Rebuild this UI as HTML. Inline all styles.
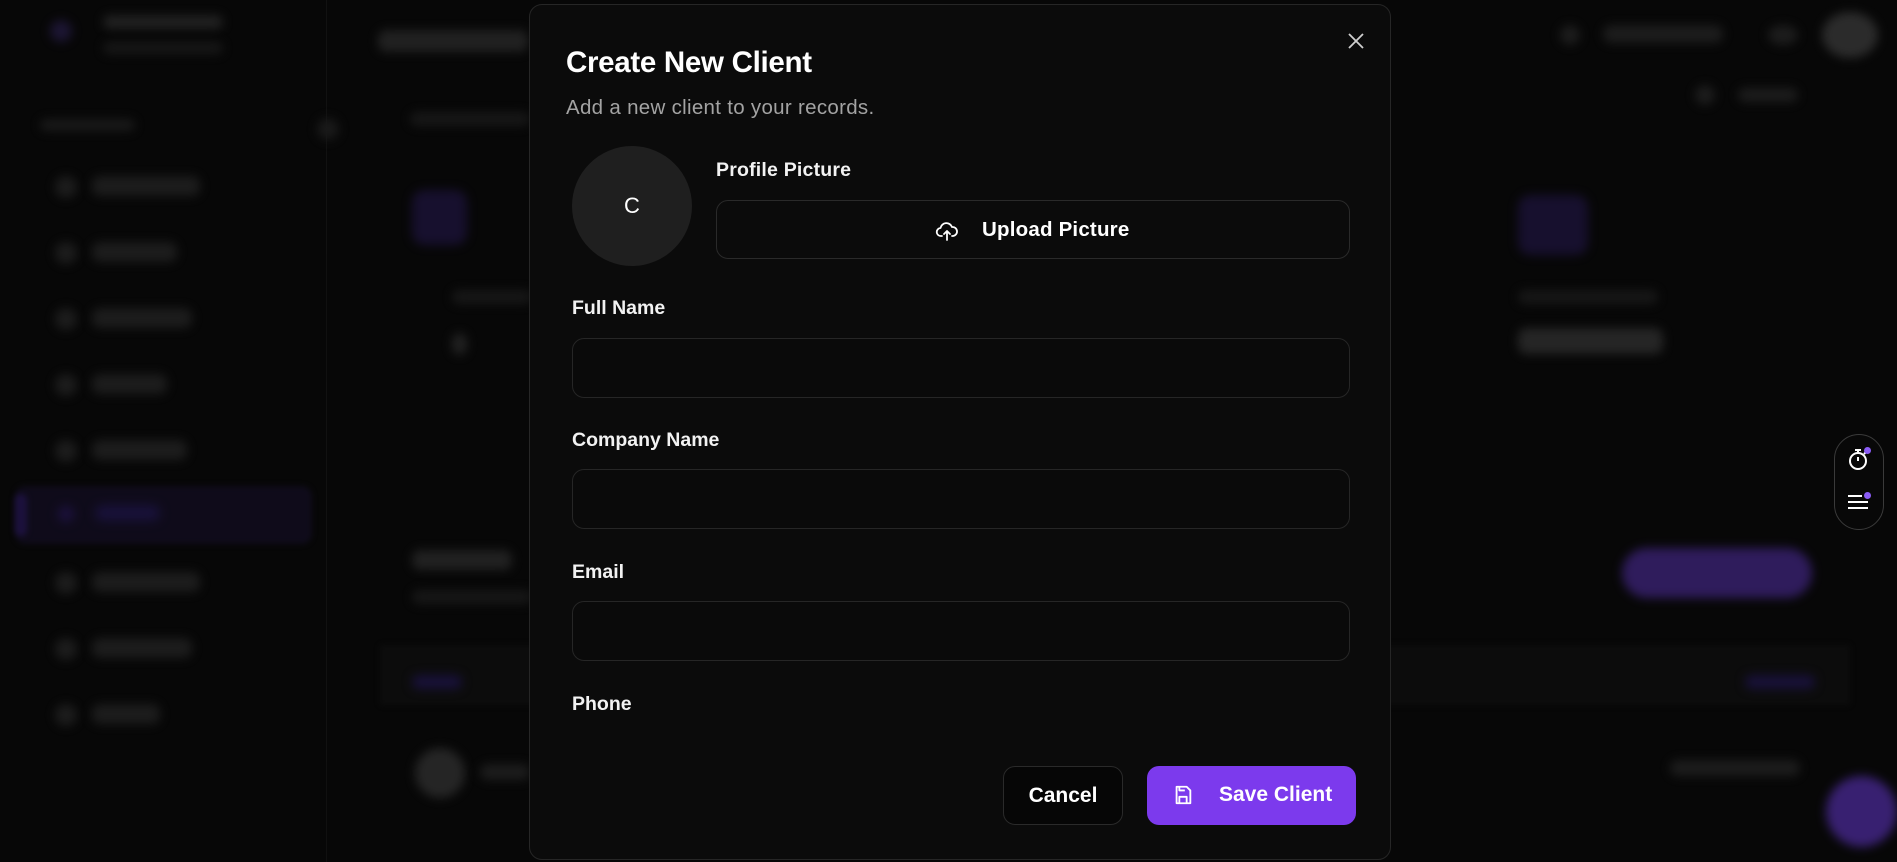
<!DOCTYPE html>
<html><head><meta charset="utf-8"><style>
*{box-sizing:border-box;margin:0;padding:0}
body{width:1897px;height:862px;overflow:hidden;background:#070707;font-family:"Liberation Sans",Arial,sans-serif;position:relative;color:#fff}
.bar{position:absolute;background:#2b2b2b;border-radius:8px;filter:blur(5px)}
.dot{position:absolute;background:#262626;border-radius:50%;filter:blur(5px)}
.modal{position:absolute;left:529px;top:4px;width:862px;height:856px;background:#0b0b0b;border:1px solid #262626;border-radius:13px}
.lbl{position:absolute;font-weight:bold;font-size:19.5px;color:#f2f2f2}
.inp{position:absolute;left:42px;width:778px;height:60px;border:1px solid #262626;border-radius:12px;background:#0a0a0a}
#bgw{position:absolute;left:0;top:0;width:1897px;height:862px;opacity:.6}
</style></head><body>
<div id="bgw">
<div style="position:absolute;left:326px;top:0;width:1px;height:862px;background:#181818"></div>
<div class="dot" style="left:50px;top:20px;width:22px;height:22px;background:#2a1f50"></div>
<div class="bar" style="left:103px;top:15px;width:120px;height:14px;background:#333"></div>
<div class="bar" style="left:103px;top:42px;width:120px;height:12px;background:#222"></div>
<div class="bar" style="left:40px;top:119px;width:95px;height:12px;background:#262626"></div>
<div class="dot" style="left:317px;top:118px;width:22px;height:22px"></div>
<div style="position:absolute;left:15px;top:486px;width:297px;height:58px;background:#150f28;border-radius:10px;filter:blur(3px)"></div>
<div style="position:absolute;left:15px;top:494px;width:12px;height:42px;background:#2a1860;border-radius:6px;filter:blur(3px)"></div>
<div class="bar" style="left:55px;top:176px;width:22px;height:22px;border-radius:50%"></div><div class="bar" style="left:92px;top:176px;width:108px;height:20px"></div>
<div class="bar" style="left:55px;top:242px;width:22px;height:22px;border-radius:50%"></div><div class="bar" style="left:92px;top:242px;width:85px;height:20px"></div>
<div class="bar" style="left:55px;top:308px;width:22px;height:22px;border-radius:50%"></div><div class="bar" style="left:92px;top:308px;width:100px;height:20px"></div>
<div class="bar" style="left:55px;top:374px;width:22px;height:22px;border-radius:50%"></div><div class="bar" style="left:92px;top:374px;width:75px;height:20px"></div>
<div class="bar" style="left:55px;top:440px;width:22px;height:22px;border-radius:50%"></div><div class="bar" style="left:92px;top:440px;width:95px;height:20px"></div>
<div class="bar" style="left:58px;top:506px;width:16px;height:16px;border-radius:50%;background:#2a1860"></div><div class="bar" style="left:95px;top:505px;width:65px;height:16px;background:#24185a"></div>
<div class="bar" style="left:55px;top:572px;width:22px;height:22px;border-radius:50%"></div><div class="bar" style="left:92px;top:572px;width:108px;height:20px"></div>
<div class="bar" style="left:55px;top:638px;width:22px;height:22px;border-radius:50%"></div><div class="bar" style="left:92px;top:638px;width:100px;height:20px"></div>
<div class="bar" style="left:55px;top:704px;width:22px;height:22px;border-radius:50%"></div><div class="bar" style="left:92px;top:704px;width:68px;height:20px"></div>
<div class="bar" style="left:378px;top:30px;width:150px;height:22px;background:#333"></div>
<div class="bar" style="left:410px;top:112px;width:120px;height:14px;background:#222"></div>
<div class="bar" style="left:412px;top:190px;width:55px;height:55px;background:#221648;border-radius:12px"></div>
<div class="bar" style="left:452px;top:290px;width:80px;height:14px;background:#222"></div>
<div class="bar" style="left:452px;top:333px;width:15px;height:22px;background:#333"></div>
<div class="bar" style="left:412px;top:550px;width:100px;height:20px;background:#333"></div>
<div class="bar" style="left:412px;top:590px;width:120px;height:14px;background:#222"></div>
<div style="position:absolute;left:380px;top:645px;width:1470px;height:60px;background:#101010;filter:blur(3px)"></div>
<div class="bar" style="left:412px;top:675px;width:50px;height:14px;background:#24185a"></div>
<div class="bar" style="left:1745px;top:675px;width:70px;height:14px;background:#24185a"></div>
<div class="dot" style="left:415px;top:748px;width:50px;height:50px;background:#3a3a3a"></div>
<div class="bar" style="left:480px;top:764px;width:50px;height:16px"></div>
<div class="bar" style="left:1670px;top:760px;width:130px;height:16px"></div>
<div class="bar" style="left:1560px;top:25px;width:20px;height:20px;border-radius:50%"></div>
<div class="bar" style="left:1603px;top:25px;width:120px;height:18px"></div>
<div class="bar" style="left:1768px;top:25px;width:30px;height:20px;border-radius:50%"></div>
<div class="dot" style="left:1822px;top:12px;width:56px;height:46px;background:#444"></div>
<div class="bar" style="left:1695px;top:85px;width:20px;height:20px;border-radius:50%"></div>
<div class="bar" style="left:1738px;top:88px;width:60px;height:14px"></div>
<div class="bar" style="left:1518px;top:195px;width:70px;height:60px;background:#221648;border-radius:12px"></div>
<div class="bar" style="left:1518px;top:290px;width:140px;height:14px;background:#222"></div>
<div class="bar" style="left:1518px;top:328px;width:145px;height:26px;background:#3a3a3a"></div>
<div style="position:absolute;left:1622px;top:548px;width:190px;height:50px;background:#4a2a95;border-radius:25px;filter:blur(5px)"></div>
<div style="position:absolute;left:1826px;top:776px;width:71px;height:71px;border-radius:50%;background:#5a32b8;filter:blur(5px)"></div>
</div>
<!-- floating pill -->
<div style="position:absolute;left:1834px;top:434px;width:50px;height:96px;border:1px solid #3a3a3a;border-radius:25px;background:#080808"></div>
<svg style="position:absolute;left:1845px;top:445px" width="28" height="28" viewBox="0 0 28 28" fill="none" stroke="#fff" stroke-width="2"><circle cx="13" cy="16" r="8"/><path d="M13 16V12M10 5h6M13 5v3M19 9l2-2"/></svg>
<div style="position:absolute;left:1864px;top:447px;width:7px;height:7px;border-radius:50%;background:#8b5cf6"></div>
<svg style="position:absolute;left:1845px;top:490px" width="28" height="24" viewBox="0 0 28 24" stroke="#fff" stroke-width="2"><path d="M3 6h14M3 12h20M3 18h20"/></svg>
<div style="position:absolute;left:1864px;top:492px;width:7px;height:7px;border-radius:50%;background:#8b5cf6"></div>

<!-- modal -->
<div class="modal">
 <svg style="position:absolute;left:817px;top:27px" width="18" height="18" viewBox="0 0 18 18" stroke="#cfcfcf" stroke-width="1.8"><path d="M2 2l14 14M16 2L2 16"/></svg>
 <div style="position:absolute;left:36px;top:41px;font-size:29.5px;font-weight:bold;letter-spacing:-0.3px">Create New Client</div>
 <div style="position:absolute;left:36px;top:91px;font-size:20.5px;letter-spacing:0.3px;color:#a3a3a3">Add a new client to your records.</div>
 <div style="position:absolute;left:42px;top:141px;width:120px;height:120px;border-radius:50%;background:#1f1f1f;text-align:center;line-height:120px;font-size:22px">C</div>
 <div class="lbl" style="left:186px;top:154px;letter-spacing:0.2px">Profile Picture</div>
 <div style="position:absolute;left:186px;top:195px;width:634px;height:59px;border:1px solid #2a2a2a;border-radius:12px"></div>
 <svg style="position:absolute;left:405px;top:214px" width="24" height="24" viewBox="0 0 24 24" fill="none" stroke="#fff" stroke-width="1.8" stroke-linecap="round" stroke-linejoin="round"><path d="M7 17H6a4 4 0 0 1-.5-8A6 6 0 0 1 17 8a4.5 4.5 0 0 1 1 9h-1"/><path d="M12 21v-9M9 15l3-3 3 3"/></svg>
 <div style="position:absolute;left:452px;top:213px;font-size:20.5px;font-weight:bold;letter-spacing:0.2px">Upload Picture</div>
 <div class="lbl" style="left:42px;top:292px">Full Name</div>
 <div class="inp" style="top:333px"></div>
 <div class="lbl" style="left:42px;top:424px">Company Name</div>
 <div class="inp" style="top:464px"></div>
 <div class="lbl" style="left:42px;top:556px">Email</div>
 <div class="inp" style="top:596px"></div>
 <div class="lbl" style="left:42px;top:688px">Phone</div>
 <div style="position:absolute;left:473px;top:761px;width:120px;height:59px;border:1px solid #2a2a2a;border-radius:12px;background:#060606;text-align:center;line-height:57px;font-size:21px;font-weight:bold">Cancel</div>
 <div style="position:absolute;left:617px;top:761px;width:209px;height:59px;border-radius:12px;background:#7c3aed;font-size:21px;font-weight:bold">
  <svg style="position:absolute;left:25px;top:18px" width="22" height="22" viewBox="0 0 24 24" fill="none" stroke="#fff" stroke-width="2" stroke-linejoin="round"><path d="M5 3h11l4 4v14H5z"/><path d="M8 21v-7h8v7M8 3v4h6"/></svg>
  <span style="position:absolute;left:72px;top:17px">Save Client</span>
 </div>
</div>
</body></html>
